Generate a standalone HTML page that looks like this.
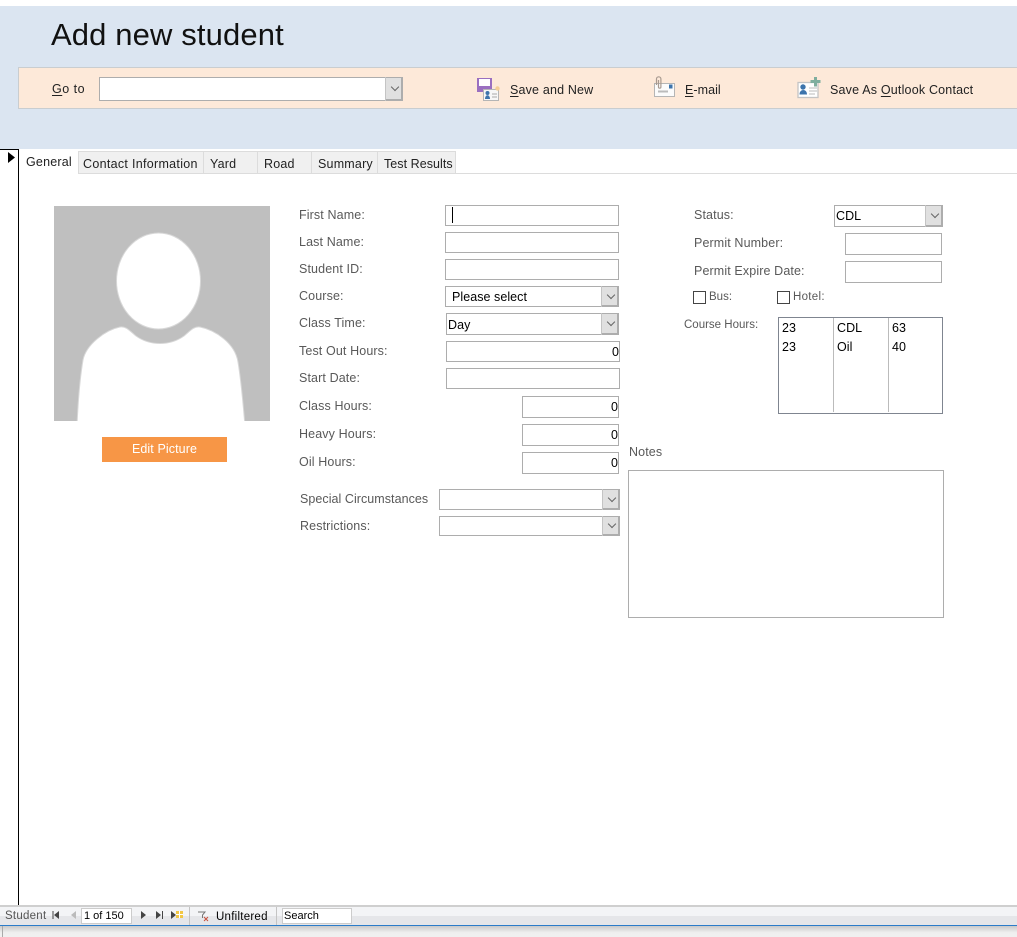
<!DOCTYPE html>
<html><head><meta charset="utf-8"><style>
html,body{margin:0;padding:0;background:#fff;width:1017px;height:937px;overflow:hidden}
body{position:relative;font-family:"Liberation Sans",sans-serif;font-size:12.5px;color:#000}
.a,.l,.t,.i,.c,.tab{position:absolute;box-sizing:border-box}
.l{color:#595959;white-space:nowrap;line-height:16px;letter-spacing:.12px}
.t{white-space:nowrap;line-height:16px;letter-spacing:.05px}
.i{background:#fff;border:1px solid #adadad}
.c{background:#fff;border:1px solid #adadad}
.c:after{content:"";position:absolute;right:-1px;top:-1px;bottom:-1px;width:17px;background:#e0e0e0;border-left:1px solid #c4c4c4;box-shadow:inset -2px -2px 0 #adadad,inset 0 1px 0 #adadad}
.c:before{content:"";position:absolute;z-index:2;right:4px;top:50%;margin-top:-5px;width:5px;height:5px;border-right:1px solid #666;border-bottom:1px solid #666;transform:rotate(45deg)}
.n{position:absolute;right:0;top:2px;line-height:16px}
.tab{background:#f0f0f0;border:1px solid #dcdcdc;border-left:0;height:23px;top:151px;padding:4px 0 0 6px;line-height:16px;letter-spacing:.2px;white-space:nowrap;color:#222}
u{text-decoration-thickness:1px;text-underline-offset:2px}
</style></head><body>

<div class="a" style="left:0;top:6px;width:1017px;height:143px;background:#dbe5f1"></div>
<div class="t" style="left:51px;top:16px;font-size:31px;line-height:38px;color:#111;letter-spacing:.13px">Add new student</div>

<div class="a" style="left:18px;top:67px;width:999px;height:42px;background:#fde9d9;border:1px solid #c9cdd0;border-right:0"></div>
<div class="t" style="left:52px;top:81px;color:#222;letter-spacing:.5px"><u>G</u>o to</div>
<div class="c" style="left:99px;top:77px;width:304px;height:24px"></div>

<svg class="a" style="left:476px;top:77px" width="26" height="26" viewBox="0 0 26 26">
<path d="M1 1h15v11H8v3H1z" fill="#9a6fc0"/><rect x="3" y="2" width="11" height="7" fill="#fff"/>
<rect x="7.500" y="12.500" width="15" height="11" fill="#f7f7f7" stroke="#b5b5b5"/>
<circle cx="11.500" cy="16" r="2" fill="#3d74ac"/><path d="M9 22c0-5 5-5 5 0z" fill="#3d74ac"/>
<path d="M16 17h5M16 20h5" stroke="#aaa"/><circle cx="21.500" cy="11.500" r="2.200" fill="#f4cf96"/></svg>
<div class="t" style="left:510px;top:82px;color:#222;letter-spacing:.17px"><u>S</u>ave and New</div>

<svg class="a" style="left:652px;top:76px" width="26" height="24" viewBox="0 0 26 24">
<rect x="2.500" y="7.500" width="20" height="13" fill="#fbfbfb" stroke="#b5b5b5"/>
<path d="M4.500 9V3a2.200 2.200 0 0 1 4.400 0v8a1.200 1.200 0 0 1-2.400 0V4" fill="none" stroke="#a89a90" stroke-width="1.200"/>
<rect x="17" y="8.500" width="3.500" height="4" fill="#3d74ac"/><path d="M6 15.500h10" stroke="#bbb" stroke-width="2"/></svg>
<div class="t" style="left:685px;top:82px;color:#222;letter-spacing:.05px"><u>E</u>-mail</div>

<svg class="a" style="left:796px;top:76px" width="26" height="24" viewBox="0 0 26 24">
<rect x="2" y="6.500" width="20" height="15" fill="#fff" stroke="#c4c4c4" stroke-width="1.300"/>
<circle cx="7" cy="11" r="2.700" fill="#3d74ac"/><path d="M3.500 18.500c0-6 7.500-6 7.500 0z" fill="#3d74ac"/>
<path d="M13 12h8M13 15h8M13 18h6" stroke="#bbb"/>
<path d="M18 1h3v3h3.500v3H21v3.500h-3V7h-3.500V4H18z" fill="#7fae9e"/></svg>
<div class="t" style="left:830px;top:82px;color:#222;letter-spacing:.19px">Save As <u>O</u>utlook Contact</div>

<!-- record selector -->
<div class="a" style="left:0;top:149px;width:19px;height:1px;background:#000"></div>
<div class="a" style="left:18px;top:149px;width:1px;height:756px;background:#000"></div>
<svg class="a" style="left:7px;top:151px" width="9" height="13"><path d="M1 1l7 5.500-7 5.500z" fill="#000"/></svg>

<!-- tabs -->
<div class="a" style="left:78px;top:173px;width:939px;height:1px;background:#dcdcdc"></div>
<div class="t" style="left:26px;top:154px;color:#222;letter-spacing:.2px">General</div>
<div class="tab" style="left:78px;width:126px;border-left:1px solid #dcdcdc;padding-left:4px;letter-spacing:.3px">Contact Information</div>
<div class="tab" style="left:204px;width:54px">Yard</div>
<div class="tab" style="left:258px;width:54px">Road</div>
<div class="tab" style="left:312px;width:66px">Summary</div>
<div class="tab" style="left:378px;width:78px;letter-spacing:.05px">Test Results</div>

<!-- picture -->
<svg class="a" style="left:54px;top:206px" width="216" height="215" viewBox="0 0 216 215">
<rect width="216" height="215" fill="#bfbfbf"/>
<ellipse cx="104.500" cy="75" rx="42" ry="48" fill="#fff" stroke="#d8d8d8"/>
<path d="M23 220c1-24 3-48 6-66 3-15 22-30 37-33 6-1 10 4 16 9 14 10 34 10 48 0 6-5 10-10 16-9 15 3 35 16 38 35 3 18 5 40 7 64z" fill="#fff" stroke="#d8d8d8"/>
</svg>
<div class="a" style="left:102px;top:437px;width:125px;height:25px;background:#f79646;color:#fff;text-align:center;line-height:25px;letter-spacing:.1px">Edit Picture</div>

<!-- middle labels -->
<div class="l" style="left:299px;top:207px">First Name:</div>
<div class="l" style="left:299px;top:234px">Last Name:</div>
<div class="l" style="left:299px;top:261px">Student ID:</div>
<div class="l" style="left:299px;top:288px">Course:</div>
<div class="l" style="left:299px;top:315px">Class Time:</div>
<div class="l" style="left:299px;top:343px">Test Out Hours:</div>
<div class="l" style="left:299px;top:370px">Start Date:</div>
<div class="l" style="left:299px;top:398px">Class Hours:</div>
<div class="l" style="left:299px;top:426px">Heavy Hours:</div>
<div class="l" style="left:299px;top:454px">Oil Hours:</div>
<div class="l" style="left:300px;top:491px;letter-spacing:.05px">Special Circumstances</div>
<div class="l" style="left:300px;top:518px">Restrictions:</div>

<div class="i" style="left:445px;top:205px;width:174px;height:21px"></div>
<div class="a" style="left:452px;top:207px;width:1px;height:16px;background:#000"></div>
<div class="i" style="left:445px;top:232px;width:174px;height:21px"></div>
<div class="i" style="left:445px;top:259px;width:174px;height:21px"></div>
<div class="c" style="left:445px;top:286px;width:174px;height:21px"><span class="t" style="left:6px;top:2px">Please select</span></div>
<div class="c" style="left:446px;top:313px;width:173px;height:22px"><span class="t" style="left:1px;top:3px">Day</span></div>
<div class="i" style="left:446px;top:341px;width:174px;height:21px"><span class="n">0</span></div>
<div class="i" style="left:446px;top:368px;width:174px;height:21px"></div>
<div class="i" style="left:522px;top:396px;width:97px;height:22px"><span class="n">0</span></div>
<div class="i" style="left:522px;top:424px;width:97px;height:22px"><span class="n">0</span></div>
<div class="i" style="left:522px;top:452px;width:97px;height:22px"><span class="n">0</span></div>
<div class="c" style="left:439px;top:489px;width:181px;height:21px"></div>
<div class="c" style="left:439px;top:516px;width:181px;height:20px"></div>

<!-- right column -->
<div class="l" style="left:694px;top:207px">Status:</div>
<div class="l" style="left:694px;top:235px">Permit Number:</div>
<div class="l" style="left:694px;top:263px">Permit Expire Date:</div>
<div class="c" style="left:834px;top:205px;width:109px;height:22px"><span class="t" style="left:1px;top:2px">CDL</span></div>
<div class="i" style="left:845px;top:233px;width:97px;height:22px"></div>
<div class="i" style="left:845px;top:261px;width:97px;height:22px"></div>

<div class="a" style="left:693px;top:291px;width:13px;height:13px;border:1px solid #444;background:#fff"></div>
<div class="l" style="left:709px;top:289px;font-size:11.500px;letter-spacing:0">Bus:</div>
<div class="a" style="left:777px;top:291px;width:13px;height:13px;border:1px solid #444;background:#fff"></div>
<div class="l" style="left:793px;top:289px;font-size:11.500px;letter-spacing:.3px">Hotel:</div>

<div class="l" style="left:684px;top:317px;font-size:11.500px;letter-spacing:0">Course Hours:</div>
<div class="a" style="left:778px;top:317px;width:165px;height:97px;border:1px solid #7f8590;background:#fff"></div>
<div class="a" style="left:833px;top:318px;width:1px;height:94px;background:#bbb"></div>
<div class="a" style="left:888px;top:318px;width:1px;height:94px;background:#bbb"></div>
<div class="t" style="left:782px;top:320px">23</div><div class="t" style="left:837px;top:320px">CDL</div><div class="t" style="left:892px;top:320px">63</div>
<div class="t" style="left:782px;top:339px">23</div><div class="t" style="left:837px;top:339px">Oil</div><div class="t" style="left:892px;top:339px">40</div>

<div class="l" style="left:629px;top:444px">Notes</div>
<div class="i" style="left:628px;top:470px;width:316px;height:148px"></div>

<!-- status bar -->
<div class="a" style="left:0;top:905px;width:1017px;height:20px;background:linear-gradient(#f3f4f6 50%,#e5e6e9 50%);border-top:2px solid #cfcfcf"></div>
<div class="a" style="left:0;top:925px;width:1017px;height:1px;background:#2b7cc9"></div>
<div class="a" style="left:0;top:926px;width:1017px;height:11px;background:linear-gradient(#c9c9c9,#efefef 60%,#f0f0f0)"></div>
<div class="a" style="left:2px;top:926px;width:1px;height:11px;background:#aaa"></div>
<div class="l" style="left:5px;top:908px;font-size:11.500px;color:#555;letter-spacing:.25px">Student</div>
<svg class="a" style="left:50px;top:909px" width="140" height="13">
<path d="M3 2v8" stroke="#444"/><path d="M9 2L4 6l5 4z" fill="#444"/>
<path d="M26 2l-5 4 5 4z" fill="#bbb"/>
<path d="M91 2l5 4-5 4z" fill="#444"/>
<path d="M106 2l5 4-5 4z M112 2h1v8h-1z" fill="#444"/>
<path d="M121 2l5 4-5 4z" fill="#444"/><rect x="126" y="2" width="7" height="7" fill="#f2c744"/><path d="M126 5.500h7M129.500 2v7" stroke="#fff"/>
</svg>
<div class="i" style="left:81px;top:908px;width:51px;height:16px;border-color:#ccc;font-size:11px;line-height:15px;padding-left:2px">1 of 150</div>
<div class="a" style="left:189px;top:907px;width:1px;height:18px;background:#c4c4c4"></div>
<svg class="a" style="left:198px;top:911px" width="12" height="11"><path d="M0 1h7L4.500 4v3" fill="none" stroke="#777"/><path d="M6 6l4 4M10 6l-4 4" stroke="#c8503c"/></svg>
<div class="t" style="left:216px;top:909px;font-size:11.500px;letter-spacing:.25px">Unfiltered</div>
<div class="a" style="left:276px;top:907px;width:1px;height:18px;background:#c4c4c4"></div>
<div class="i" style="left:282px;top:908px;width:70px;height:16px;border-color:#ccc;font-size:11px;line-height:15px;padding-left:1px">Search</div>
</body></html>
